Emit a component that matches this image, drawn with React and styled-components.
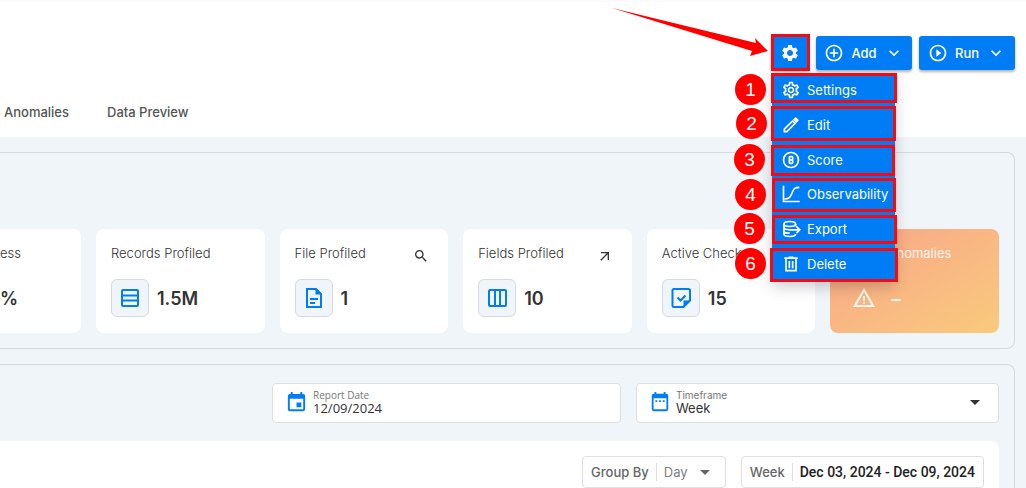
import styled, { createGlobalStyle, css } from "styled-components";
import {
  MdAddCircleOutline,
  MdArrowDropDown,
  MdArrowOutward,
  MdEvent,
  MdKeyboardArrowDown,
  MdOutlineSettings,
  MdPlayCircleOutline,
  MdSearch,
  MdSettings,
  MdWarningAmber,
} from "react-icons/md";

const blue = "#007df5";
const line = "#d5dae0";

const GlobalStyle = createGlobalStyle`
  * {
    box-sizing: border-box;
  }
  body {
    margin: 0;
    background: #f0f5fa;
    color: #333;
    font-family: Inter, "Liberation Sans", sans-serif;
    font-size: 13px;
    overflow: hidden;
  }
  button, input, select {
    margin: 0;
    padding: 0;
    border: 0;
    background: none;
    color: inherit;
    font: inherit;
  }
`;

const Header = styled.header`
  display: flex;
  flex-direction: column;
  height: 137px;
  background: #fff;
  border-top: 2px solid #fafafa;
`;

const Actions = styled.div`
  display: flex;
  justify-content: flex-end;
  gap: 7px;
  padding: 34px 11px 0 0;
`;

const Button = styled.button`
  display: flex;
  align-items: center;
  justify-content: center;
  gap: 7px;
  width: ${(p) => (p.$square ? "38px" : "96px")};
  height: 34px;
  border-radius: 3px;
  background: ${blue};
  color: #fff;
  font-weight: 500;
  box-shadow: 0 2px 3px rgba(0, 0, 0, 0.3);
`;

const MenuAnchor = styled.div`
  position: relative;
`;

const Menu = styled.div`
  position: absolute;
  z-index: 2;
  top: 37px;
  left: 1px;
  display: grid;
  grid-auto-rows: 1fr;
  width: 123px;
  height: 208px;
  background: ${blue};
  box-shadow: 0 6px 14px rgba(0, 0, 0, 0.2);
`;

const MenuItem = styled.button`
  display: flex;
  align-items: center;
  gap: 6px;
  padding-left: 9px;
  color: #fff;
  white-space: nowrap;
`;

// highlight boxes and number pins sit over the menu
const Highlight = styled.span`
  position: absolute;
  z-index: 3;
  top: ${(p) => p.$top}px;
  left: ${(p) => p.$left}px;
  width: ${(p) => p.$width}px;
  height: ${(p) => p.$height}px;
  border: 3px solid #f20a14;
  pointer-events: none;
`;

const Pin = styled.span`
  position: absolute;
  z-index: 3;
  top: ${(p) => p.$top}px;
  left: ${(p) => p.$left}px;
  display: grid;
  place-items: center;
  width: 31px;
  height: 31px;
  border-radius: 50%;
  background: #f00;
  color: #fff;
  font-family: "Liberation Sans", Arial, sans-serif;
  font-size: 19px;
`;

const Arrow = styled.svg`
  position: absolute;
  top: -36px;
  right: 39px;
  width: 160px;
  height: 62px;
`;

const Tabs = styled.nav`
  display: flex;
  gap: 38px;
  margin-top: auto;
  padding: 0 4px 16px;
`;

const Tab = styled.a`
  color: #555;
  font-weight: 500;
  line-height: 18px;
  text-decoration: none;
`;

const Main = styled.main`
  display: flex;
  flex-direction: column;
  gap: 15px;
  padding: 15px 11px 0 0;
`;

const Panel = styled.section`
  border: 1px solid ${line};
  border-left: 0;
  border-radius: 0 8px 8px 0;
  padding: ${(p) => p.$padding};
`;

const Cards = styled.div`
  display: grid;
  grid-template-columns: 81px repeat(5, 1fr);
  gap: 15px;
`;

const Card = styled.article`
  display: flex;
  flex-direction: column;
  gap: 16px;
  height: 104px;
  padding: 15px;
  border-radius: 8px;
  background: #fff;
  ${(p) =>
    p.$cut &&
    css`
      padding-left: 0;
      border-radius: 0 8px 8px 0;
    `}
  ${(p) =>
    p.$warm &&
    css`
      background: linear-gradient(150deg, #f9a58a, #f9ca7c);
      color: #fff6ee;
    `}
`;

const CardHead = styled.div`
  display: flex;
  justify-content: space-between;
  height: 19px;
  font-weight: ${(p) => (p.$warm ? 400 : 300)};
  line-height: 19px;
  white-space: nowrap;

  svg {
    margin: 4px 4px 0 0;
  }
`;

const CardBody = styled.div`
  display: flex;
  align-items: center;
  gap: 8px;
  height: 38px;
  font-size: 18px;
  font-weight: 600;
`;

const IconBox = styled.span`
  display: grid;
  place-items: center;
  width: 38px;
  height: 38px;
  border: 1px solid ${(p) => (p.$plain ? "transparent" : line)};
  border-radius: 6px;
  background: ${(p) => (p.$plain ? "none" : "#f0f5fa")};
  color: ${(p) => (p.$plain ? "inherit" : blue)};
`;

const Filters = styled.div`
  display: flex;
  gap: 15px;
  padding: 0 15px 0 272px;
`;

const Field = styled.div`
  position: relative;
  display: flex;
  flex: ${(p) => p.$grow} 1 0;
  align-items: center;
  gap: 5px;
  height: 40px;
  padding: 0 12px 2px;
  border: 1px solid #dfdfdf;
  border-radius: 4px;
  background: #fff;
`;

const FieldIcon = styled.span`
  display: flex;
  color: ${blue};
`;

const FieldText = styled.div`
  display: flex;
  flex: 1;
  flex-direction: column;
  min-width: 0;

  label {
    color: #777;
    font-size: 10px;
    line-height: 12px;
  }
  input, select {
    width: 100%;
    height: 14px;
    line-height: 14px;
    appearance: none;
  }
`;

const DateText = styled(FieldText)`
  font-family: "Open Sans", "Noto Sans", sans-serif;
`;

const Caret = styled(MdArrowDropDown)`
  position: absolute;
  right: ${(p) => p.$right};
  pointer-events: none;
`;

const Chart = styled.div`
  display: flex;
  justify-content: flex-end;
  gap: 15px;
  min-height: 80px;
  margin: 18px 15px 0 0;
  padding: 15px;
  border-top-right-radius: 8px;
  background: #fff;
`;

const Chip = styled.div`
  position: relative;
  display: flex;
  align-items: center;
  height: 32px;
  padding: 0 8px;
  border: 1px solid #dfdfdf;
  border-radius: 4px;
  color: #666;
  font-weight: 500;

  label {
    padding-right: 7px;
    border-right: 1px solid #dfdfdf;
    line-height: 18px;
  }
  select {
    width: 60px;
    padding-left: 7px;
    color: #808080;
    font-weight: 400;
    appearance: none;
  }
  button {
    padding-left: 7px;
    color: #222;
    font-family: Roboto, Inter, sans-serif;
    font-size: 14px;
  }
`;

const Stroke = ({ size = 20, width = 2, children }) => (
  <svg
    width={size}
    height={size}
    viewBox="0 0 24 24"
    fill="none"
    stroke="currentColor"
    strokeWidth={width}
  >
    {children}
  </svg>
);

const PencilIcon = () => (
  <Stroke>
    <path d="M4 20v-3L14 7l3 3L7 20z" />
    <path d="M14.500 5.500l4 4L21 7c.4-.4.4-1 0-1.400L18.400 3c-.4-.4-1-.4-1.400 0z" fill="currentColor" stroke="none" />
  </Stroke>
);

const ScoreIcon = () => (
  <Stroke>
    <circle cx="12" cy="12" r="9" />
    <rect x="10" y="8" width="4" height="4" rx="1" />
    <rect x="10" y="12" width="4" height="4" rx="1" />
  </Stroke>
);

const CurveIcon = () => (
  <Stroke>
    <path d="M3 2v19h19.500" />
    <path d="M4 18c8 0 8-5 10-9s3-5 8-5" />
  </Stroke>
);

const ExportIcon = () => (
  <Stroke>
    <ellipse cx="10.500" cy="6" rx="7" ry="3" />
    <path d="M3.500 6v12c0 1.700 3 3 7 3s7-1.300 7-3M3.500 10c0 1.700 3 3 7 3M3.500 14c0 1.700 3 3 7 3M17.500 6v3M10 13h12M18.500 9l4 4-4 4" />
  </Stroke>
);

const TrashIcon = () => (
  <Stroke>
    <path d="M4 5h16M9 4h6M6 5v15h12V5M10 8.500v8.500M14 8.500v8.500" />
  </Stroke>
);

const RowsIcon = () => (
  <Stroke size={24}>
    <rect x="4" y="4" width="16" height="16" rx="1" />
    <path d="M4 9.500h16M4 14.500h16" />
  </Stroke>
);

const ColumnsIcon = () => (
  <Stroke size={24}>
    <rect x="4" y="4" width="17" height="16" rx="1" />
    <path d="M10 4v16M15 4v16" />
  </Stroke>
);

const FileIcon = () => (
  <Stroke size={24}>
    <path d="M14 3H5v18h14V8z" />
    <path d="M13.500 2v6.500H20z" fill="currentColor" stroke="none" />
    <path d="M8 13h8M8 17h5" />
  </Stroke>
);

const CheckIcon = () => (
  <Stroke size={24}>
    <path d="M14.500 21H5a1.500 1.500 0 0 1-1.500-1.500v-15A1.500 1.500 0 0 1 5 3h14.500A1.500 1.500 0 0 1 21 4.500v10z" />
    <path d="M14.500 21v-6.500H21z" fill="currentColor" stroke="none" />
    <path d="M8.500 11.500l3 3 5-5" />
  </Stroke>
);

const CalendarIcon = () => (
  <svg width="22" height="22" viewBox="0 0 24 24" fill="currentColor">
    <path
      fillRule="evenodd"
      d="M6 1h2v2h8V1h2v2h1a2 2 0 0 1 2 2v15a2 2 0 0 1-2 2H5a2 2 0 0 1-2-2V5a2 2 0 0 1 2-2h1zM5 8v12h14V8zM7 10h2v2H7zM11 10h2v2h-2zM15 10h2v2h-2z"
    />
  </svg>
);

const items = [
  { name: "Settings", icon: <MdOutlineSettings size={20} />, box: [37, 0, 126, 30], pin: [38, -36] },
  { name: "Edit", icon: <PencilIcon />, box: [70, 0, 125, 35], pin: [72, -35] },
  { name: "Score", icon: <ScoreIcon />, box: [109, 0, 124, 31], pin: [108, -37] },
  { name: "Observability", icon: <CurveIcon />, box: [142, 1, 124, 34], pin: [143, -36] },
  { name: "Export", icon: <ExportIcon />, box: [179, 1, 125, 29], pin: [177, -37] },
  { name: "Delete", icon: <TrashIcon />, box: [212, -1, 128, 34], pin: [212, -36] },
];

const cards = [
  { name: "ess", value: "%", cut: true },
  { name: "Records Profiled", value: "1.5M", icon: <RowsIcon /> },
  { name: "File Profiled", value: "1", icon: <FileIcon />, action: <MdSearch size={16} /> },
  { name: "Fields Profiled", value: "10", icon: <ColumnsIcon />, action: <MdArrowOutward size={16} /> },
  { name: "Active Checks", value: "15", icon: <CheckIcon /> },
  { name: "Active Anomalies", value: "–", icon: <MdWarningAmber size={24} />, warm: true },
];

const SettingsMenu = () => (
  <MenuAnchor>
    <Button $square aria-label="Settings menu">
      <MdSettings size={20} />
    </Button>
    <Menu>
      {items.map((item) => (
        <MenuItem key={item.name}>
          {item.icon}
          {item.name}
        </MenuItem>
      ))}
    </Menu>
    <Highlight $top={-2} $left={0} $width={39} $height={37} />
    {items.map(({ name, box }) => (
      <Highlight key={name} $top={box[0]} $left={box[1]} $width={box[2]} $height={box[3]} />
    ))}
    {items.map(({ name, pin }, i) => (
      <Pin key={name} $top={pin[0]} $left={pin[1]}>
        {i + 1}
      </Pin>
    ))}
    <Arrow viewBox="0 0 160 62">
      <path d="M2 8 L146 43 L145 38 L158 51 L140 56 L142 51 Z" fill="#f00" />
    </Arrow>
  </MenuAnchor>
);

const App = () => {
  return (
    <>
      <GlobalStyle />
      <Header>
        <Actions>
          <SettingsMenu />
          <Button>
            <MdAddCircleOutline size={20} />
            Add
            <MdKeyboardArrowDown size={20} />
          </Button>
          <Button>
            <MdPlayCircleOutline size={20} />
            Run
            <MdKeyboardArrowDown size={20} />
          </Button>
        </Actions>
        <Tabs>
          <Tab href="#anomalies">Anomalies</Tab>
          <Tab href="#preview">Data Preview</Tab>
        </Tabs>
      </Header>

      <Main>
        <Panel $padding="76px 15px 15px 0">
          <Cards>
            {cards.map((card) => (
              <Card key={card.name} $cut={card.cut} $warm={card.warm}>
                <CardHead $warm={card.warm}>
                  {card.name}
                  {card.action}
                </CardHead>
                <CardBody>
                  {card.icon && <IconBox $plain={card.warm}>{card.icon}</IconBox>}
                  {card.value}
                </CardBody>
              </Card>
            ))}
          </Cards>
        </Panel>

        <Panel $padding="18px 0 0">
          <Filters>
            <Field $grow={321}>
              <FieldIcon>
                <MdEvent size={23} />
              </FieldIcon>
              <DateText>
                <label htmlFor="date">Report Date</label>
                <input id="date" defaultValue="12/09/2024" />
              </DateText>
            </Field>
            <Field $grow={335}>
              <FieldIcon>
                <CalendarIcon />
              </FieldIcon>
              <FieldText>
                <label htmlFor="timeframe">Timeframe</label>
                <select id="timeframe">
                  <option>Week</option>
                </select>
              </FieldText>
              <Caret size={24} $right="11px" />
            </Field>
          </Filters>
          <Chart>
            <Chip>
              <label htmlFor="group">Group By</label>
              <select id="group">
                <option>Day</option>
              </select>
              <Caret size={24} $right="8px" />
            </Chip>
            <Chip>
              <label htmlFor="range">Week</label>
              <button id="range">Dec 03, 2024 - Dec 09, 2024</button>
            </Chip>
          </Chart>
        </Panel>
      </Main>
    </>
  );
};

export default App;
